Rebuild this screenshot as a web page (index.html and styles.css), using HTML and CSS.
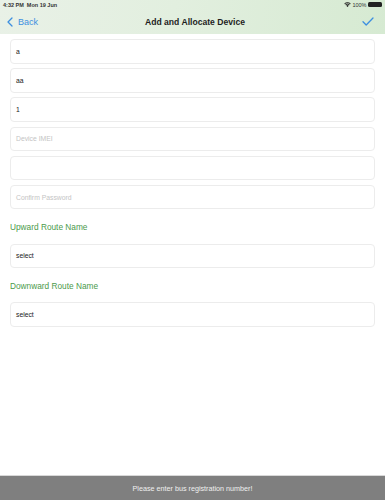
FILE: index.html
```html
<!DOCTYPE html>
<html>
<head>
<meta charset="utf-8">
<link rel="stylesheet" href="styles.css">
</head>
<body>
<div class="page">
  <header class="header">
    <div class="status">
      <span class="time">4:32 PM&nbsp;&nbsp;Mon 19 Jun</span>
      <span class="status-right">
        <svg class="wifi" width="7" height="5" viewBox="0 0 14 10"><path d="M7 10 L4.5 7.3 A3.6 3.6 0 0 1 9.5 7.3 Z M2.6 5.3 A6.3 6.3 0 0 1 11.4 5.3 L10.2 6.6 A4.6 4.6 0 0 0 3.8 6.6 Z M0.6 3.2 A9.2 9.2 0 0 1 13.4 3.2 L12.2 4.5 A7.5 7.5 0 0 0 1.8 4.5 Z" fill="#222"/></svg>
        <span class="pct">100%</span>
        <span class="battery"><span class="batt-fill"></span></span>
      </span>
    </div>
    <div class="nav">
      <div class="back">
        <svg width="6" height="10" viewBox="0 0 6 10"><path d="M5 1 L1 5 L5 9" fill="none" stroke="#3d8fe0" stroke-width="1.3" stroke-linecap="round" stroke-linejoin="round"/></svg>
        <span>Back</span>
      </div>
      <div class="title">Add and Allocate Device</div>
      <div class="done">
        <svg width="12" height="9" viewBox="0 0 12 9"><path d="M1 4.8 L4.2 8 L11 1" fill="none" stroke="#3d8fe0" stroke-width="1.3" stroke-linecap="round" stroke-linejoin="round"/></svg>
      </div>
    </div>
  </header>
  <main class="form">
    <div class="field">a</div>
    <div class="field">aa</div>
    <div class="field">1</div>
    <div class="field placeholder">Device IMEI</div>
    <div class="field"></div>
    <div class="field placeholder">Confirm Password</div>
    <div class="label">Upward Route Name</div>
    <div class="field">select</div>
    <div class="label">Downward Route Name</div>
    <div class="field">select</div>
  </main>
  <div class="toast">Please enter bus registration number!</div>
</div>
</body>
</html>
```
FILE: styles.css
```css
* { box-sizing: border-box; }
html, body { margin: 0; padding: 0; }
body {
  width: 385px;
  height: 500px;
  background: #fff;
  font-family: "Liberation Sans", Arial, sans-serif;
  overflow: hidden;
}
.page {
  position: relative;
  width: 385px;
  height: 500px;
}
.header {
  height: 34px;
  background: linear-gradient(100deg, #e9f1e7 0%, #e2efdf 45%, #d6ead2 100%);
}
.status {
  display: flex;
  justify-content: space-between;
  align-items: center;
  height: 9px;
  padding: 0 3px 0 3px;
  font-size: 5.5px;
  color: #333;
  font-weight: 600;
}
.time { margin-top: 1px; }
.status-right {
  display: flex;
  align-items: center;
  gap: 1.5px;
}
.pct { font-weight: normal; }
.battery {
  display: inline-block;
  width: 14px;
  height: 5px;
  border-radius: 1.5px;
  background: #222;
}
.nav {
  display: flex;
  align-items: center;
  justify-content: space-between;
  height: 25px;
  padding: 0 11px 0 7px;
}
.back {
  display: flex;
  align-items: center;
  gap: 5px;
  color: #3d8fe0;
  font-size: 9px;
  width: 60px;
}
.title {
  font-size: 8.6px;
  font-weight: bold;
  color: #1e1e1e;
  flex: 1;
  text-align: center;
  margin-left: 9px;
}
.done {
  width: 60px;
  display: flex;
  justify-content: flex-end;
}
.form {
  display: flex;
  flex-direction: column;
  padding: 5px 10px 0 10px;
}
.field {
  height: 24.5px;
  border: 1px solid #ececec;
  border-radius: 4px;
  margin-bottom: 4.7px;
  display: flex;
  align-items: center;
  padding-left: 5px;
  font-size: 6.8px;
  color: #222;
  background: #fff;
}
.field.placeholder { color: #c4c4c4; }
.label {
  color: #4b9a4b;
  font-size: 8.3px;
  margin: 8px 0 12.5px 0;
  height: 9px;
}
.toast {
  position: absolute;
  left: 0;
  right: 0;
  bottom: 0;
  height: 25px;
  background: #7f7f7f;
  border-top: 1px solid #d8d8d8;
  color: #f0f0f0;
  font-size: 7.2px;
  display: flex;
  align-items: center;
  justify-content: center;
}
```
